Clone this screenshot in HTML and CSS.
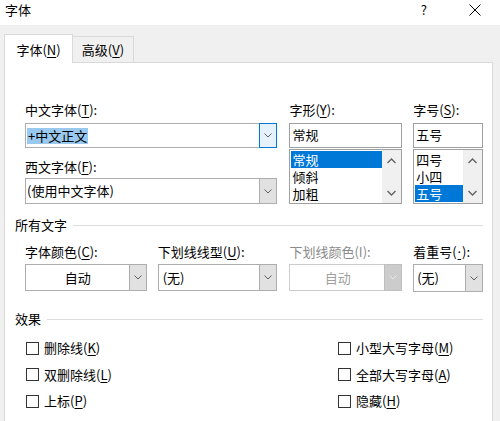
FILE: index.html
```html
<!DOCTYPE html>
<html lang="zh-CN">
<head>
<meta charset="utf-8">
<title>字体</title>
<link rel="stylesheet" href="styles.css">
</head>
<body>
<div class="titlebar">
  <span class="title">字体</span>
  <span class="help">?</span>
  <span class="close"><svg width="12" height="12" viewBox="0 0 12 12"><path d="M0.5 0.5 L11.5 11.5 M11.5 0.5 L0.5 11.5" stroke="#000" stroke-width="1" fill="none"/></svg></span>
</div>

<div class="tabs">
  <div class="tab active">字体(<u>N</u>)</div>
  <div class="tab inactive">高级(<u>V</u>)</div>
</div>

<div class="panel">
  <div class="top">
    <div class="col-main">
      <div class="label">中文字体(<u>T</u>):</div>
      <div class="combo c25 mt4">
        <span class="val"><span class="sel">+中文正文</span></span>
        <span class="btn focus"><svg class="chev" width="8" height="5" viewBox="0 0 8 5"><polyline points="0.5,0.5 4,4 7.5,0.5" /></svg></span>
      </div>
      <div class="label mt10">西文字体(<u>F</u>):</div>
      <div class="combo c26 mt2">
        <span class="val">(使用中文字体)</span>
        <span class="btn"><svg class="chev" width="8" height="5" viewBox="0 0 8 5"><polyline points="0.5,0.5 4,4 7.5,0.5" /></svg></span>
      </div>
    </div>

    <div class="col-style">
      <div class="label">字形(<u>Y</u>):</div>
      <div class="textbox mt4">常规</div>
      <div class="listbox">
        <div class="items">
          <div class="item selected">常规</div>
          <div class="item">倾斜</div>
          <div class="item">加粗</div>
        </div>
        <div class="scroll">
          <svg class="arrow" width="9" height="6" viewBox="0 0 9 6"><polyline points="0.5,5 4.5,1 8.5,5" /></svg>
          <svg class="arrow" width="9" height="6" viewBox="0 0 9 6"><polyline points="0.5,1 4.5,5 8.5,1" /></svg>
        </div>
      </div>
    </div>

    <div class="col-size">
      <div class="label">字号(<u>S</u>):</div>
      <div class="textbox mt4">五号</div>
      <div class="listbox">
        <div class="items">
          <div class="item">四号</div>
          <div class="item">小四</div>
          <div class="item selected">五号</div>
        </div>
        <div class="scroll">
          <svg class="arrow" width="9" height="6" viewBox="0 0 9 6"><polyline points="0.5,5 4.5,1 8.5,5" /></svg>
          <svg class="arrow" width="9" height="6" viewBox="0 0 9 6"><polyline points="0.5,1 4.5,5 8.5,1" /></svg>
        </div>
      </div>
    </div>
  </div>

  <div class="group-head gh1"><span>所有文字</span><span class="rule"></span></div>

  <div class="row2">
    <div class="field f1">
      <div class="label">字体颜色(<u>C</u>):</div>
      <div class="combo c27 mt3">
        <span class="val center">自动</span>
        <span class="btn"><svg class="chev" width="8" height="5" viewBox="0 0 8 5"><polyline points="0.5,0.5 4,4 7.5,0.5" /></svg></span>
      </div>
    </div>
    <div class="field f2">
      <div class="label">下划线线型(<u>U</u>):</div>
      <div class="combo c27 mt3">
        <span class="val pad4">(无)</span>
        <span class="btn"><svg class="chev" width="8" height="5" viewBox="0 0 8 5"><polyline points="0.5,0.5 4,4 7.5,0.5" /></svg></span>
      </div>
    </div>
    <div class="field f3">
      <div class="label disabled">下划线颜色(I):</div>
      <div class="combo c27 mt3 is-disabled">
        <span class="val center">自动</span>
        <span class="btn"><svg class="chev" width="8" height="5" viewBox="0 0 8 5"><polyline points="0.5,0.5 4,4 7.5,0.5" /></svg></span>
      </div>
    </div>
    <div class="field f4">
      <div class="label">着重号(<u class="latin">·</u>):</div>
      <div class="combo c28 mt3">
        <span class="val pad3">(无)</span>
        <span class="btn"><svg class="chev" width="8" height="5" viewBox="0 0 8 5"><polyline points="0.5,0.5 4,4 7.5,0.5" /></svg></span>
      </div>
    </div>
  </div>

  <div class="group-head gh2"><span>效果</span><span class="rule"></span></div>

  <div class="checks">
    <label class="check"><span class="box"></span><span>删除线(<u>K</u>)</span></label>
    <label class="check"><span class="box"></span><span>小型大写字母(<u>M</u>)</span></label>
    <label class="check"><span class="box"></span><span>双删除线(<u>L</u>)</span></label>
    <label class="check"><span class="box"></span><span>全部大写字母(<u>A</u>)</span></label>
    <label class="check"><span class="box"></span><span>上标(<u>P</u>)</span></label>
    <label class="check"><span class="box"></span><span>隐藏(<u>H</u>)</span></label>
    <label class="check"><span class="box"></span><span>下标(<u>B</u>)</span></label>
  </div>
</div>
</body>
</html>
```

FILE: styles.css
```css
* { box-sizing: border-box; }

html, body {
  margin: 0;
  padding: 0;
}

body {
  width: 500px;
  height: 421px;
  overflow: hidden;
  background: #f0f0f0;
  font-family: "Noto Sans CJK SC", "Noto Sans", sans-serif;
  font-size: 13px;
  color: #000;
}

u {
  text-decoration: underline;
  text-underline-offset: 2px;
  text-decoration-thickness: 1px;
}
.latin {
  font-family: "Noto Sans", "Liberation Sans", sans-serif;
  padding: 0 1px;
}

/* Title bar */
.titlebar {
  height: 25px;
  background: #fff;
  display: flex;
  align-items: flex-start;
  padding-top: 1px;
  line-height: 18px;
}
.title {
  margin-left: 5px;
}
.help {
  margin-left: auto;
  margin-right: 42px;
  font-size: 13px;
}
.close {
  margin-right: 19px;
  margin-top: 3px;
  display: flex;
}

/* Tabs */
.tabs {
  display: flex;
  align-items: flex-end;
  padding-top: 9px;
  padding-left: 4px;
}
.tab {
  text-align: center;
  line-height: 18px;
  border: 1px solid #d9d9d9;
  border-bottom: none;
}
.tab.active {
  width: 69px;
  height: 29px;
  padding-top: 6px;
  margin-bottom: -1px;
  background: #fff;
  position: relative;
  z-index: 1;
}
.tab.inactive {
  width: 61px;
  height: 26px;
  padding-top: 4px;
  border-left: none;
  background: #f0f0f0;
}

/* Panel */
.panel {
  margin-left: 4px;
  width: 489px;
  height: 380px;
  background: #fff;
  border: 1px solid #d9d9d9;
  padding: 38px 9px 0 10px;
}

.label {
  line-height: 18px;
  white-space: nowrap;
}
.label.disabled { color: #8a8a8a; }

.mt2 { margin-top: 2px; }
.mt3 { margin-top: 3px; }
.mt4 { margin-top: 4px; }
.mt10 { margin-top: 10px; }

/* Top section */
.top {
  display: flex;
  padding-left: 10px;
}
.col-main { width: 253px; }
.col-style { width: 113px; margin-left: 12px; }
.col-size { width: 70px; margin-left: 11px; }

/* Combo boxes */
.combo {
  display: flex;
  border: 1px solid #adadad;
  background: #fff;
}
.c25 { height: 25px; }
.c26 { height: 26px; }
.c27 { height: 27px; }
.c28 { height: 28px; }

.combo .val {
  flex: 1;
  display: flex;
  align-items: center;
  padding-left: 1px;
  white-space: nowrap;
  line-height: 18px;
}
.combo .val.center { justify-content: center; }
.combo .val.pad4 { padding-left: 4px; }
.combo .val.pad3 { padding-left: 3px; }

.sel {
  background: #99c9ef;
  line-height: 16px;
  padding: 0 1px;
}

.combo .btn {
  width: 18px;
  margin: -1px -1px -1px 0;
  border: 1px solid #adadad;
  background: #e1e1e1;
  display: flex;
  align-items: center;
  justify-content: center;
}
.combo .btn.focus {
  border-color: #0078d7;
  background: #e5f1fb;
}
.chev polyline {
  fill: none;
  stroke: #606060;
  stroke-width: 1;
}

.combo.is-disabled {
  border-color: #cccccc;
  background: #fff;
}
.combo.is-disabled .val { color: #a0a0a0; }
.combo.is-disabled .btn {
  border-color: #bfbfbf;
  background: #cccccc;
}
.combo.is-disabled .chev polyline { stroke: #e6e6e6; }

/* Text box + list box */
.textbox {
  height: 25px;
  border: 1px solid #a0a0a0;
  padding-left: 2px;
  line-height: 22px;
}
.listbox {
  margin-top: 1px;
  height: 55px;
  border: 1px solid #a0a0a0;
  padding: 1px 0 1px 1px;
  display: flex;
}
.items { flex: 1; }
.item {
  height: 17px;
  line-height: 17px;
  padding-left: 1px;
  white-space: nowrap;
}
.item.selected {
  background: #0078d7;
  color: #fff;
}
.scroll {
  width: 19px;
  margin-top: -1px;
  margin-bottom: -1px;
  background: #f0f0f0;
  display: flex;
  flex-direction: column;
  align-items: center;
  justify-content: space-between;
  padding: 8px 0 7px;
}
.arrow polyline {
  fill: none;
  stroke: #606060;
  stroke-width: 1.3;
}

/* Group headings */
.group-head {
  display: flex;
  align-items: center;
  line-height: 18px;
}
.group-head .rule {
  flex: 1;
  height: 1px;
  background: #dcdcdc;
  margin-left: 6px;
}
.gh1 { margin-top: 12px; }
.gh2 { margin-top: 18px; }

/* Row 2 fields */
.row2 {
  display: flex;
  padding-left: 10px;
  margin-top: 9px;
}
.f1 { width: 122px; }
.f2 { width: 120px; margin-left: 11px; }
.f3 { width: 113px; margin-left: 12px; }
.f4 { width: 70px; margin-left: 11px; }

/* Checkboxes */
.checks {
  margin-top: 7px;
  padding-left: 11px;
  display: grid;
  grid-template-columns: 312px 1fr;
  grid-auto-rows: 26.5px;
}
.check {
  display: flex;
  align-items: center;
  white-space: nowrap;
  line-height: 18px;
}
.box {
  width: 13px;
  height: 13px;
  border: 1px solid #333;
  background: #fff;
  margin-right: 5px;
  flex: none;
}
```
